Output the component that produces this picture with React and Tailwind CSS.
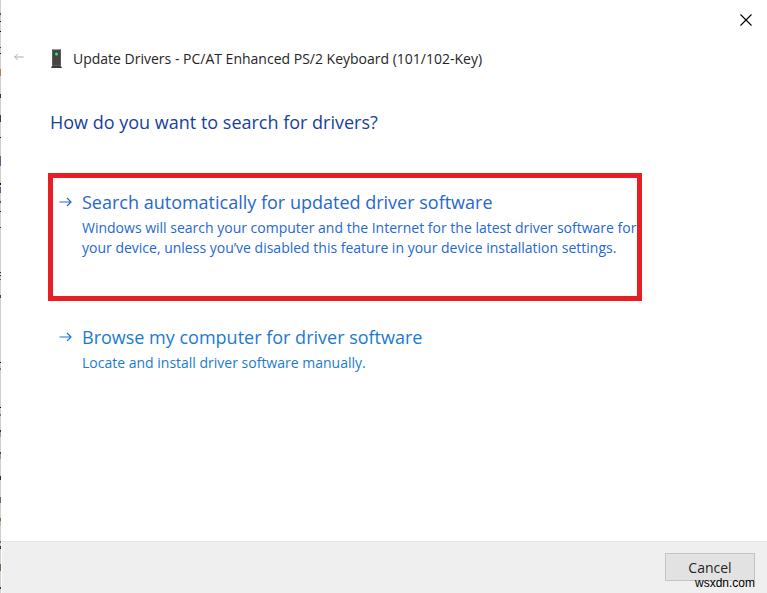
const EDGE_MARKS = [
  [13, 2, '#555'], [21, 1, '#222'], [31, 1, '#111'], [47, 1, '#444'], [53, 1, '#222'],
  [69, 7, '#a98258'], [94, 4, '#4b3626'], [115, 7, '#4b3a2c'], [137, 1, '#222'],
  [156, 10, '#4c6788'], [183, 2, '#111'], [187, 6, '#4c6788'], [201, 2, '#555'],
  [211, 1, '#222'], [227, 1, '#444'], [272, 1, '#222'], [275, 1, '#333'], [279, 1, '#555'],
  [295, 3, '#444'], [362, 1, '#111'], [368, 2, '#777'], [407, 1, '#111'], [414, 2, '#777'],
  [430, 2, '#333'], [432, 5, '#b09a88'], [452, 2, '#444'], [454, 5, '#b09a88'],
  [476, 4, '#3a2a20'], [497, 6, '#7d6650'], [518, 3, '#7d6650'], [521, 5, '#c7b29c'],
  [541, 2, '#7d6650'], [546, 3, '#3a3030'], [564, 7, '#7d6650'], [587, 2, '#3a3030'],
];

function Arrow({ className, flip }) {
  return (
    <svg
      viewBox="0 0 13 10"
      className={className}
      fill="none"
      stroke="currentColor"
      strokeWidth="1.2"
      aria-hidden="true"
    >
      <g transform={flip ? 'translate(13 0) scale(-1 1)' : undefined}>
        <path d="M0.5 5H12M8 1l4 4-4 4" />
      </g>
    </svg>
  );
}

function DeviceIcon() {
  return (
    <svg viewBox="0 0 12 20" className="h-5 w-3 shrink-0" aria-hidden="true">
      <path d="M2 0.500h9v16H2z" fill="#454545" />
      <path d="M2 0.500h1v16H2zM10 0.500h1v16h-1z" fill="#5c5c5c" />
      <path d="M2.500 16h8v1.500h-8z" fill="#5a5a5a" />
      <path d="M2 17h9l1 2H1z" fill="#3c3c3c" />
      <circle cx="6.500" cy="5" r="1.500" fill="#2fef6b" />
    </svg>
  );
}

function Option({ title, text, className }) {
  return (
    <button type="button" className={`flex w-full items-start gap-[10px] text-left ${className}`}>
      <Arrow className="mt-[11px] h-[10px] w-[13px] shrink-0" />
      <span className="flex flex-col">
        <span className="text-[18px] leading-8">{title}</span>
        <span className="text-[14px] leading-5">{text}</span>
      </span>
    </button>
  );
}

export default function App() {
  return (
    <div className="relative flex min-h-screen overflow-hidden bg-white font-['Open_Sans','Noto_Sans',sans-serif] text-[#252525]">
      <div className="relative w-px shrink-0 overflow-hidden bg-[#cfcfcf]" aria-hidden="true">
        <svg className="absolute left-0 top-0 h-[593px] w-px" shapeRendering="crispEdges">
          {EDGE_MARKS.map(([y, h, fill]) => (
            <rect key={y} x="0" y={y} width="1" height={h} fill={fill} />
          ))}
        </svg>
      </div>
      <div className="flex grow flex-col pl-px">
        <header>
          <div className="flex h-10 items-center justify-end pr-[13px]">
            <button type="button" aria-label="Close" className="flex size-4 items-center justify-center text-black">
              <svg viewBox="0 0 12 12" className="size-3" stroke="currentColor" strokeWidth="1.1" aria-hidden="true">
                <path d="M0.500 0.500l11 11M11.500 0.500l-11 11" />
              </svg>
            </button>
          </div>
          <div className="flex h-[38px] items-center pl-3">
            <button type="button" aria-label="Back" className="mr-[26px] pb-1 text-[#a5a5a5]">
              <Arrow flip className="h-2 w-[10px]" />
            </button>
            <DeviceIcon />
            <h1 className="ml-[11px] text-[14px] leading-5">
              Update Drivers - PC/AT Enhanced PS/2 Keyboard (101/102-Key)
            </h1>
          </div>
        </header>
        <main className="grow pr-[125px] pl-[46px]">
          <h2 className="mt-7 pl-[2px] text-[18px] leading-8 text-[#173f9c]">
            How do you want to search for drivers?
          </h2>
          <div className="mt-[35px] h-32 border-[5px] border-[#e81e25] pt-2 pl-[6px]">
            <Option
              title="Search automatically for updated driver software"
              text="Windows will search your computer and the Internet for the latest driver software for your device, unless you’ve disabled this feature in your device installation settings."
              className="text-[#2568d0]"
            />
          </div>
          <div className="px-[11px] pt-5">
            <Option
              title="Browse my computer for driver software"
              text="Locate and install driver software manually."
              className="text-[#1b7bd0]"
            />
          </div>
        </main>
        <footer className="flex h-[52px] justify-end border-t border-[#e4e4e4] bg-[#efefef] pt-[11px] pr-3">
          <button type="button" className="h-7 w-[90px] border border-[#c3c3c3] bg-[#e2e2e2] pt-px text-[14px] leading-5">
            Cancel
          </button>
        </footer>
      </div>
      <span className="absolute right-3 bottom-[2px] font-['Liberation_Sans',sans-serif] text-[12px] leading-4 text-black">
        wsxdn.com
      </span>
    </div>
  );
}
